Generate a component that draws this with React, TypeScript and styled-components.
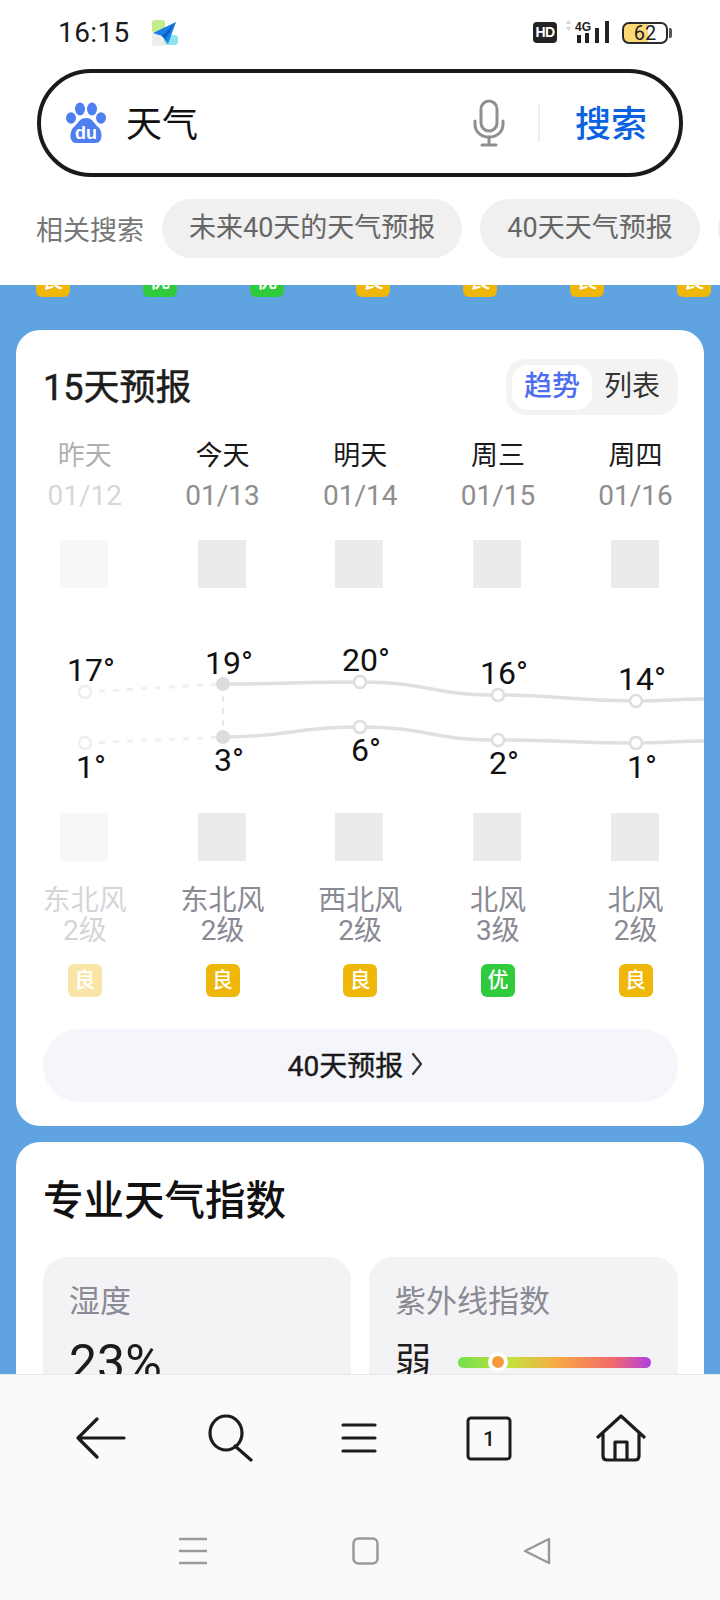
import React from 'react';
import styled, { createGlobalStyle } from 'styled-components';

const FONT = `Roboto, "Noto Sans CJK SC", sans-serif`;

const Global = createGlobalStyle`
  html, body { margin: 0; padding: 0; background: #fff; }
  body { font-family: ${FONT}; }
  * { box-sizing: border-box; }
`;

const Phone = styled.div`
  width: 720px; height: 1600px; display: flex; flex-direction: column; overflow: hidden; background: #5fa3e0;
`;
const Header = styled.header`
  flex: none; height: 285px; background: #fff; position: relative; z-index: 2; overflow: hidden;
`;
const StatusBar = styled.div`
  height: 69px; display: flex; align-items: center; padding: 0 52px 4px 58px;
`;
const Time = styled.span`
  font-size: 28px; color: #1a1a1a; letter-spacing: .4px; line-height: 1; width: 92px;
`;
const StatusRight = styled.div`
  margin-left: auto; display: flex; align-items: center;
`;
const HdBadge = styled.span`
  width: 24px; height: 21px; border-radius: 4px; background: #222; color: #fff; font: 700 14px/21px "Liberation Sans", sans-serif;
  text-align: center; letter-spacing: -.5px; margin-right: 8px;
`;
const Battery = styled.div`
  position: relative; width: 46px; height: 22px; border: 2px solid #2a2a2a; border-radius: 7px; margin-left: 11px;
  background: linear-gradient(90deg, #fbd976 0 56%, #fff 56%);
  display: flex; align-items: center; justify-content: center;
  font-size: 20px; color: #222; line-height: 1;
  &::after { content: ''; position: absolute; right: -6px; top: 4px; width: 3px; height: 10px; background: #555; border-radius: 0 2px 2px 0; }
`;
const SearchBox = styled.div`
  margin: 0 37px; height: 108px; border: 4px solid #1a1a1a; border-radius: 54px; display: flex; align-items: center; padding: 0 32px 0 25px;
`;
const Query = styled.span`
  margin-left: 20px; padding-top: 3px; font-size: 36px; color: #111; line-height: 1;
`;
const MicWrap = styled.span`
  margin-left: auto; display: flex;
`;
const Divider = styled.span`
  width: 2px; height: 38px; background: #eee; margin: 0 35px 0 33px;
`;
const SearchBtn = styled.span`
  padding-top: 3px; font-size: 36px; font-weight: 500; color: #0b62e0; line-height: 1;
`;
const Related = styled.div`
  margin-top: 22px; height: 59px; display: flex; align-items: center; padding-left: 36px; gap: 18px; white-space: nowrap;
`;
const RelatedLabel = styled.span`
  flex: none; font-size: 27px; color: #777;
`;
const Chip = styled.span`
  flex: none; height: 59px; border-radius: 30px; background: #f0f0f0; color: #666; font-size: 27px; line-height: 59px; padding: 0 27px;
`;
const Scroll = styled.main`
  flex: 1; min-height: 0; overflow: hidden; background: #5fa3e0; display: flex; flex-direction: column;
`;
const AqiStrip = styled.div`
  flex: none; height: 45px; display: flex; justify-content: space-between; padding: 0 9px 0 36px;
`;
const StripBadge = styled.span<{ $good?: boolean }>`
  width: 34px; height: 33px; margin-top: -21px; border-radius: 6px; background: ${p => (p.$good ? '#2fcb3d' : '#eeb70a')};
  color: #fff; font-size: 21px; font-weight: 500; line-height: 33px; text-align: center;
`;
const Card = styled.section`
  flex: none; margin: 0 16px 16px; background: #fff; border-radius: 24px; overflow: hidden;
`;
const ForecastCard = styled(Card)`
  height: 796px; padding-top: 28px;
`;
const CardHead = styled.div`
  display: flex; align-items: center; justify-content: space-between; height: 57px; padding: 0 26px 0 27px;
`;
const ForecastTitle = styled.h2`
  margin: 0; padding-top: 2px; font-size: 36px; font-weight: 400; -webkit-text-stroke: .5px #1c1c1c; color: #1c1c1c; line-height: 1;
`;
const Toggle = styled.div`
  width: 172px; height: 56px; border-radius: 20px; background: #f3f3f3; padding: 6px; display: flex;
`;
const ToggleItem = styled.span<{ $on?: boolean }>`
  flex: none; width: 80px; height: 45px; border-radius: 16px; text-align: center; line-height: 44px; font-size: 28px;
  background: ${p => (p.$on ? '#fff' : 'transparent')}; color: ${p => (p.$on ? '#4e6ef2' : '#333')}; font-weight: ${p => (p.$on ? 500 : 400)};
`;
const Columns = styled.div`
  display: grid; grid-template-columns: repeat(5, 137.7px);
`;
const Column = styled.div<{ $dim?: boolean }>`
  display: flex; flex-direction: column; align-items: center; opacity: ${p => (p.$dim ? 0.35 : 1)};
`;
const DayName = styled.span`
  margin-top: 23px; font-size: 27px; line-height: 36px; color: #1a1a1a;
`;
const DayDate = styled.span`
  margin-top: 4px; font-size: 28px; line-height: 36px; color: #8e8e8e;
`;
const WeatherIcon = styled.span<{ $top?: boolean }>`
  width: 48px; height: 48px; background: #ebebeb; margin-right: 2px; margin-top: ${p => (p.$top ? 26 : 0)}px;
`;
const Chart = styled.svg`
  display: block; margin-top: 32px; width: 688px; height: 193px;
`;
const ChartLabel = styled.text`
  font-family: ${FONT}; font-size: 32px; fill: #111; text-anchor: middle; dominant-baseline: central;
`;
const Wind = styled.span`
  margin-top: 25px; width: 100%; text-align: center; font-size: 28px; line-height: 30px; color: #8a8a95; white-space: pre-line;
`;
const Aqi = styled.span<{ $good?: boolean }>`
  margin-top: 18px; width: 34px; height: 33px; border-radius: 6px; background: ${p => (p.$good ? '#2fcb3d' : '#eeb70a')};
  color: #fff; font-size: 21px; font-weight: 500; line-height: 33px; text-align: center;
`;
const MoreButton = styled.div`
  margin: 32px 26px 0 27px; height: 73px; border-radius: 36px; background: #f5f6fb; display: flex; align-items: center; justify-content: center; gap: 8px;
  padding: 0 10px 3px 0; font-size: 28px; font-weight: 400; -webkit-text-stroke: .4px #1a1a1a; color: #1a1a1a;
`;
const IndexCard = styled(Card)`
  padding: 37px 26px 0 27px;
`;
const IndexTitle = styled.h2`
  margin: 0; font-size: 40.5px; font-weight: 500; color: #111; line-height: 44px;
`;
const TileGrid = styled.div`
  margin-top: 34px; display: grid; grid-template-columns: 308px 309px; gap: 18px;
`;
const Tile = styled.div`
  height: 300px; border-radius: 24px; background: #f3f3f5; padding: 26px 26px;
`;
const TileLabel = styled.div`
  font-size: 31px; line-height: 38px; color: #8a8a95;
`;
const TileValue = styled.div`
  margin-top: 12px; font-size: 50px; line-height: 60px; color: #1c1c1c;
`;
const UvRow = styled.div`
  margin-top: 18px; display: flex; align-items: center; gap: 27px;
`;
const UvWord = styled.span`
  font-size: 36px; line-height: 46px; color: #1c1c1c;
`;
const UvBar = styled.div`
  position: relative; width: 193px; height: 11px; border-radius: 6px;
  background: linear-gradient(90deg, #76e04c 0%, #c6e03e 28%, #f9a845 52%, #f36a6a 80%, #b03fe0 100%);
`;
const UvThumb = styled.span`
  position: absolute; left: 30px; top: -5px; width: 20px; height: 20px; border-radius: 50%; background: #f59a3c; border: 4px solid #fff;
`;
const BottomBar = styled.footer`
  flex: none; height: 226px; background: #fafafa; border-top: 1px solid #e8e8e8; position: relative; z-index: 2;
`;
const Toolbar = styled.nav`
  height: 126px; padding: 0 34px 0 36px; display: grid; grid-template-columns: 130px 130px 126px 134px 130px; align-items: center; justify-items: center;
`;
const SystemNav = styled.nav`
  height: 99px; padding: 0 97px 0 107px; display: grid; grid-template-columns: repeat(3, 172px); align-items: center; justify-items: center;
`;

const days = [
  { name: '昨天', date: '01/12', wind: '东北风\n2级', aqi: '良' },
  { name: '今天', date: '01/13', wind: '东北风\n2级', aqi: '良' },
  { name: '明天', date: '01/14', wind: '西北风\n2级', aqi: '良' },
  { name: '周三', date: '01/15', wind: '北风\n3级', aqi: '优' },
  { name: '周四', date: '01/16', wind: '北风\n2级', aqi: '良' },
];
const xs = [69, 207, 344, 482, 620, 688];
const highY = [72, 64, 62, 75, 81, 79];
const lowY = [123, 117, 107, 120, 123, 121];
const highLabels = [{ t: '17°', y: 50 }, { t: '19°', y: 43 }, { t: '20°', y: 40 }, { t: '16°', y: 53 }, { t: '14°', y: 59 }];
const lowLabels = [{ t: '1°', y: 147 }, { t: '3°', y: 140 }, { t: '6°', y: 130 }, { t: '2°', y: 143 }, { t: '1°', y: 147 }];

function smooth(ys: number[]) {
  let d = `M${xs[1]} ${ys[1]}`;
  for (let i = 2; i < xs.length; i++) {
    const mid = (xs[i - 1] + xs[i]) / 2;
    d += ` C${mid} ${ys[i - 1]} ${mid} ${ys[i]} ${xs[i]} ${ys[i]}`;
  }
  return d;
}

const ForecastChart = () => (
  <Chart viewBox="0 0 688 193">
    <line x1={xs[0]} y1={highY[0]} x2={xs[1]} y2={highY[1]} stroke="#f0f0f0" strokeWidth="3" strokeDasharray="6 8" />
    <line x1={xs[0]} y1={lowY[0]} x2={xs[1]} y2={lowY[1]} stroke="#f0f0f0" strokeWidth="3" strokeDasharray="6 8" />
    <line x1={xs[1]} y1={highY[1]} x2={xs[1]} y2={lowY[1]} stroke="#e8e8e8" strokeWidth="2" strokeDasharray="6 6" />
    <path d={smooth(highY)} fill="none" stroke="#e0e0e0" strokeWidth="3.5" />
    <path d={smooth(lowY)} fill="none" stroke="#e0e0e0" strokeWidth="3.5" />
    {[highY, lowY].map((ys, k) =>
      xs.slice(0, 5).map((x, i) =>
        i === 1 ? (
          <circle key={`${k}${i}`} cx={x} cy={ys[i]} r="7" fill="#dcdcdc" />
        ) : (
          <circle key={`${k}${i}`} cx={x} cy={ys[i]} r="6" fill="#fff" stroke={i === 0 ? '#eeeeee' : '#dedede'} strokeWidth="2.5" />
        )
      )
    )}
    {highLabels.map((l, i) => (
      <ChartLabel key={i} x={xs[i] + 6} y={l.y}>{l.t}</ChartLabel>
    ))}
    {lowLabels.map((l, i) => (
      <ChartLabel key={i} x={xs[i] + 6} y={l.y}>{l.t}</ChartLabel>
    ))}
  </Chart>
);

const AppGlyph = () => (
  <svg width="30" height="30" viewBox="0 0 30 30">
    <rect x="2" y="2" width="13" height="13" rx="3" fill="#c3ec8e" />
    <rect x="2" y="15" width="14" height="13" rx="2" fill="#eee" />
    <rect x="14" y="17" width="14" height="10" rx="4" fill="#8be4ee" />
    <path d="M26 4 L3 15 L12 18 L18 26 Z" fill="#1a7fe8" />
    <path d="M12 18 L26 4 L15 21 Z" fill="#0f5fc0" />
  </svg>
);
const Signal = () => (
  <svg width="46" height="26" viewBox="0 0 46 26">
    <path d="M3.5 0 L6.5 4 H0.5 Z M3.5 11 L0.5 7 H6.5 Z" fill="#d8d8d8" />
    <text x="10" y="10.5" fontFamily="Liberation Sans, sans-serif" fontWeight="700" fontSize="13" fill="#222" textLength="16" lengthAdjust="spacingAndGlyphs">4G</text>
    <rect x="12" y="15" width="4" height="8" fill="#222" />
    <rect x="20" y="13" width="4" height="10" fill="#222" />
    <rect x="30" y="8" width="4" height="15" fill="#222" />
    <rect x="40" y="1" width="4" height="22" fill="#222" />
  </svg>
);
const BaiduLogo = () => (
  <svg width="40" height="42" viewBox="0 0 40 42">
    <g fill="#4e7ff0">
      <ellipse cx="14" cy="7" rx="5" ry="6.5" />
      <ellipse cx="26" cy="7" rx="5" ry="6.5" />
      <ellipse cx="5" cy="16" rx="5" ry="5.8" />
      <ellipse cx="35" cy="16" rx="5" ry="5.8" />
      <path d="M20 16 C26 16 28 21 32 25 C37 29 37 41 30 41 L10 41 C3 41 3 29 8 25 C12 21 14 16 20 16 Z" />
    </g>
    <text x="20" y="37" textAnchor="middle" fontFamily="Liberation Sans, sans-serif" fontWeight="700" fontSize="18" fill="#fff">du</text>
  </svg>
);
const MicIcon = () => (
  <svg width="32" height="48" viewBox="0 0 32 48" fill="none" stroke="#8f8f8f" strokeWidth="3" strokeLinecap="round">
    <rect x="8" y="2" width="16" height="30" rx="8" />
    <path d="M2 22 V25 C2 33 8 38 16 38 C24 38 30 33 30 25 V22" />
    <path d="M16 38 V46 M9 46 H23" />
  </svg>
);
const Stroke = { fill: 'none', stroke: '#1c1c1c', strokeWidth: 3.2, strokeLinecap: 'round', strokeLinejoin: 'round' } as const;
const BackIcon = () => (
  <svg width="50" height="42" viewBox="0 0 50 42" {...Stroke}><path d="M21 2 L2 21 L21 40 M2 21 H48" /></svg>
);
const SearchIcon = () => (
  <svg width="48" height="48" viewBox="0 0 48 48" {...Stroke}><ellipse cx="19" cy="19" rx="16" ry="17" /><path d="M28 32 L44 46" /></svg>
);
const MenuIcon = () => (
  <svg width="36" height="32" viewBox="0 0 36 32" {...Stroke}><path d="M2 3 H34 M2 16 H34 M2 29 H34" /></svg>
);
const TabIcon = () => (
  <svg width="46" height="45" viewBox="0 0 46 45" fill="none">
    <rect x="2" y="2" width="42" height="41" rx="3" stroke="#1c1c1c" strokeWidth="3" />
    <text x="23" y="30" textAnchor="middle" fontFamily="Roboto, sans-serif" fontWeight="500" fontSize="21" fill="#1c1c1c">1</text>
  </svg>
);
const HomeIcon = () => (
  <svg width="50" height="48" viewBox="0 0 50 48" {...Stroke}>
    <path d="M2 23 L25 2 L48 23 M7 20 V42 Q7 46 11 46 H39 Q43 46 43 42 V20 M19 46 V28 H31 V46" />
  </svg>
);
const NavStroke = { fill: 'none', stroke: '#9a9a9a', strokeWidth: 2.5, strokeLinejoin: 'round' } as const;
const NavMenu = () => (
  <svg width="28" height="28" viewBox="0 0 28 28" {...NavStroke}><path d="M0 2 H28 M0 14 H28 M0 26 H28" /></svg>
);
const NavHome = () => (
  <svg width="27" height="28" viewBox="0 0 27 28" {...NavStroke}><rect x="1.5" y="1.5" width="24" height="25" rx="5" /></svg>
);
const NavBack = () => (
  <svg width="28" height="28" viewBox="0 0 28 28" {...NavStroke}><path d="M26 2 V26 L2 14 Z" /></svg>
);
const Chevron = () => (
  <svg width="12" height="24" viewBox="0 0 12 24" fill="none" stroke="#333" strokeWidth="2.2" strokeLinecap="round" strokeLinejoin="round"><path d="M2 2 L10 12 L2 22" /></svg>
);

export default function App() {
  return (
    <Phone>
      <Global />
      <Header>
        <StatusBar>
          <Time>16:15</Time>
          <AppGlyph />
          <StatusRight>
            <HdBadge>HD</HdBadge>
            <Signal />
            <Battery>62</Battery>
          </StatusRight>
        </StatusBar>
        <SearchBox>
          <BaiduLogo />
          <Query>天气</Query>
          <MicWrap><MicIcon /></MicWrap>
          <Divider />
          <SearchBtn>搜索</SearchBtn>
        </SearchBox>
        <Related>
          <RelatedLabel>相关搜索</RelatedLabel>
          <Chip>未来40天的天气预报</Chip>
          <Chip>40天天气预报</Chip>
          <Chip>天气</Chip>
        </Related>
      </Header>
      <Scroll>
        <AqiStrip>
          {['良', '优', '优', '良', '良', '良', '良'].map((t, i) => (
            <StripBadge key={i} $good={t === '优'}>{t}</StripBadge>
          ))}
        </AqiStrip>
        <ForecastCard>
          <CardHead>
            <ForecastTitle>15天预报</ForecastTitle>
            <Toggle>
              <ToggleItem $on>趋势</ToggleItem>
              <ToggleItem>列表</ToggleItem>
            </Toggle>
          </CardHead>
          <Columns>
            {days.map((d, i) => (
              <Column key={d.date} $dim={i === 0}>
                <DayName>{d.name}</DayName>
                <DayDate>{d.date}</DayDate>
                <WeatherIcon $top />
              </Column>
            ))}
          </Columns>
          <ForecastChart />
          <Columns>
            {days.map((d, i) => (
              <Column key={d.date} $dim={i === 0}>
                <WeatherIcon />
                <Wind>{d.wind}</Wind>
                <Aqi $good={d.aqi === '优'}>{d.aqi}</Aqi>
              </Column>
            ))}
          </Columns>
          <MoreButton>40天预报<Chevron /></MoreButton>
        </ForecastCard>
        <IndexCard>
          <IndexTitle>专业天气指数</IndexTitle>
          <TileGrid>
            <Tile>
              <TileLabel>湿度</TileLabel>
              <TileValue>23%</TileValue>
            </Tile>
            <Tile>
              <TileLabel>紫外线指数</TileLabel>
              <UvRow>
                <UvWord>弱</UvWord>
                <UvBar><UvThumb /></UvBar>
              </UvRow>
            </Tile>
          </TileGrid>
        </IndexCard>
      </Scroll>
      <BottomBar>
        <Toolbar>
          <BackIcon />
          <SearchIcon />
          <MenuIcon />
          <TabIcon />
          <HomeIcon />
        </Toolbar>
        <SystemNav>
          <NavMenu />
          <NavHome />
          <NavBack />
        </SystemNav>
      </BottomBar>
    </Phone>
  );
}
